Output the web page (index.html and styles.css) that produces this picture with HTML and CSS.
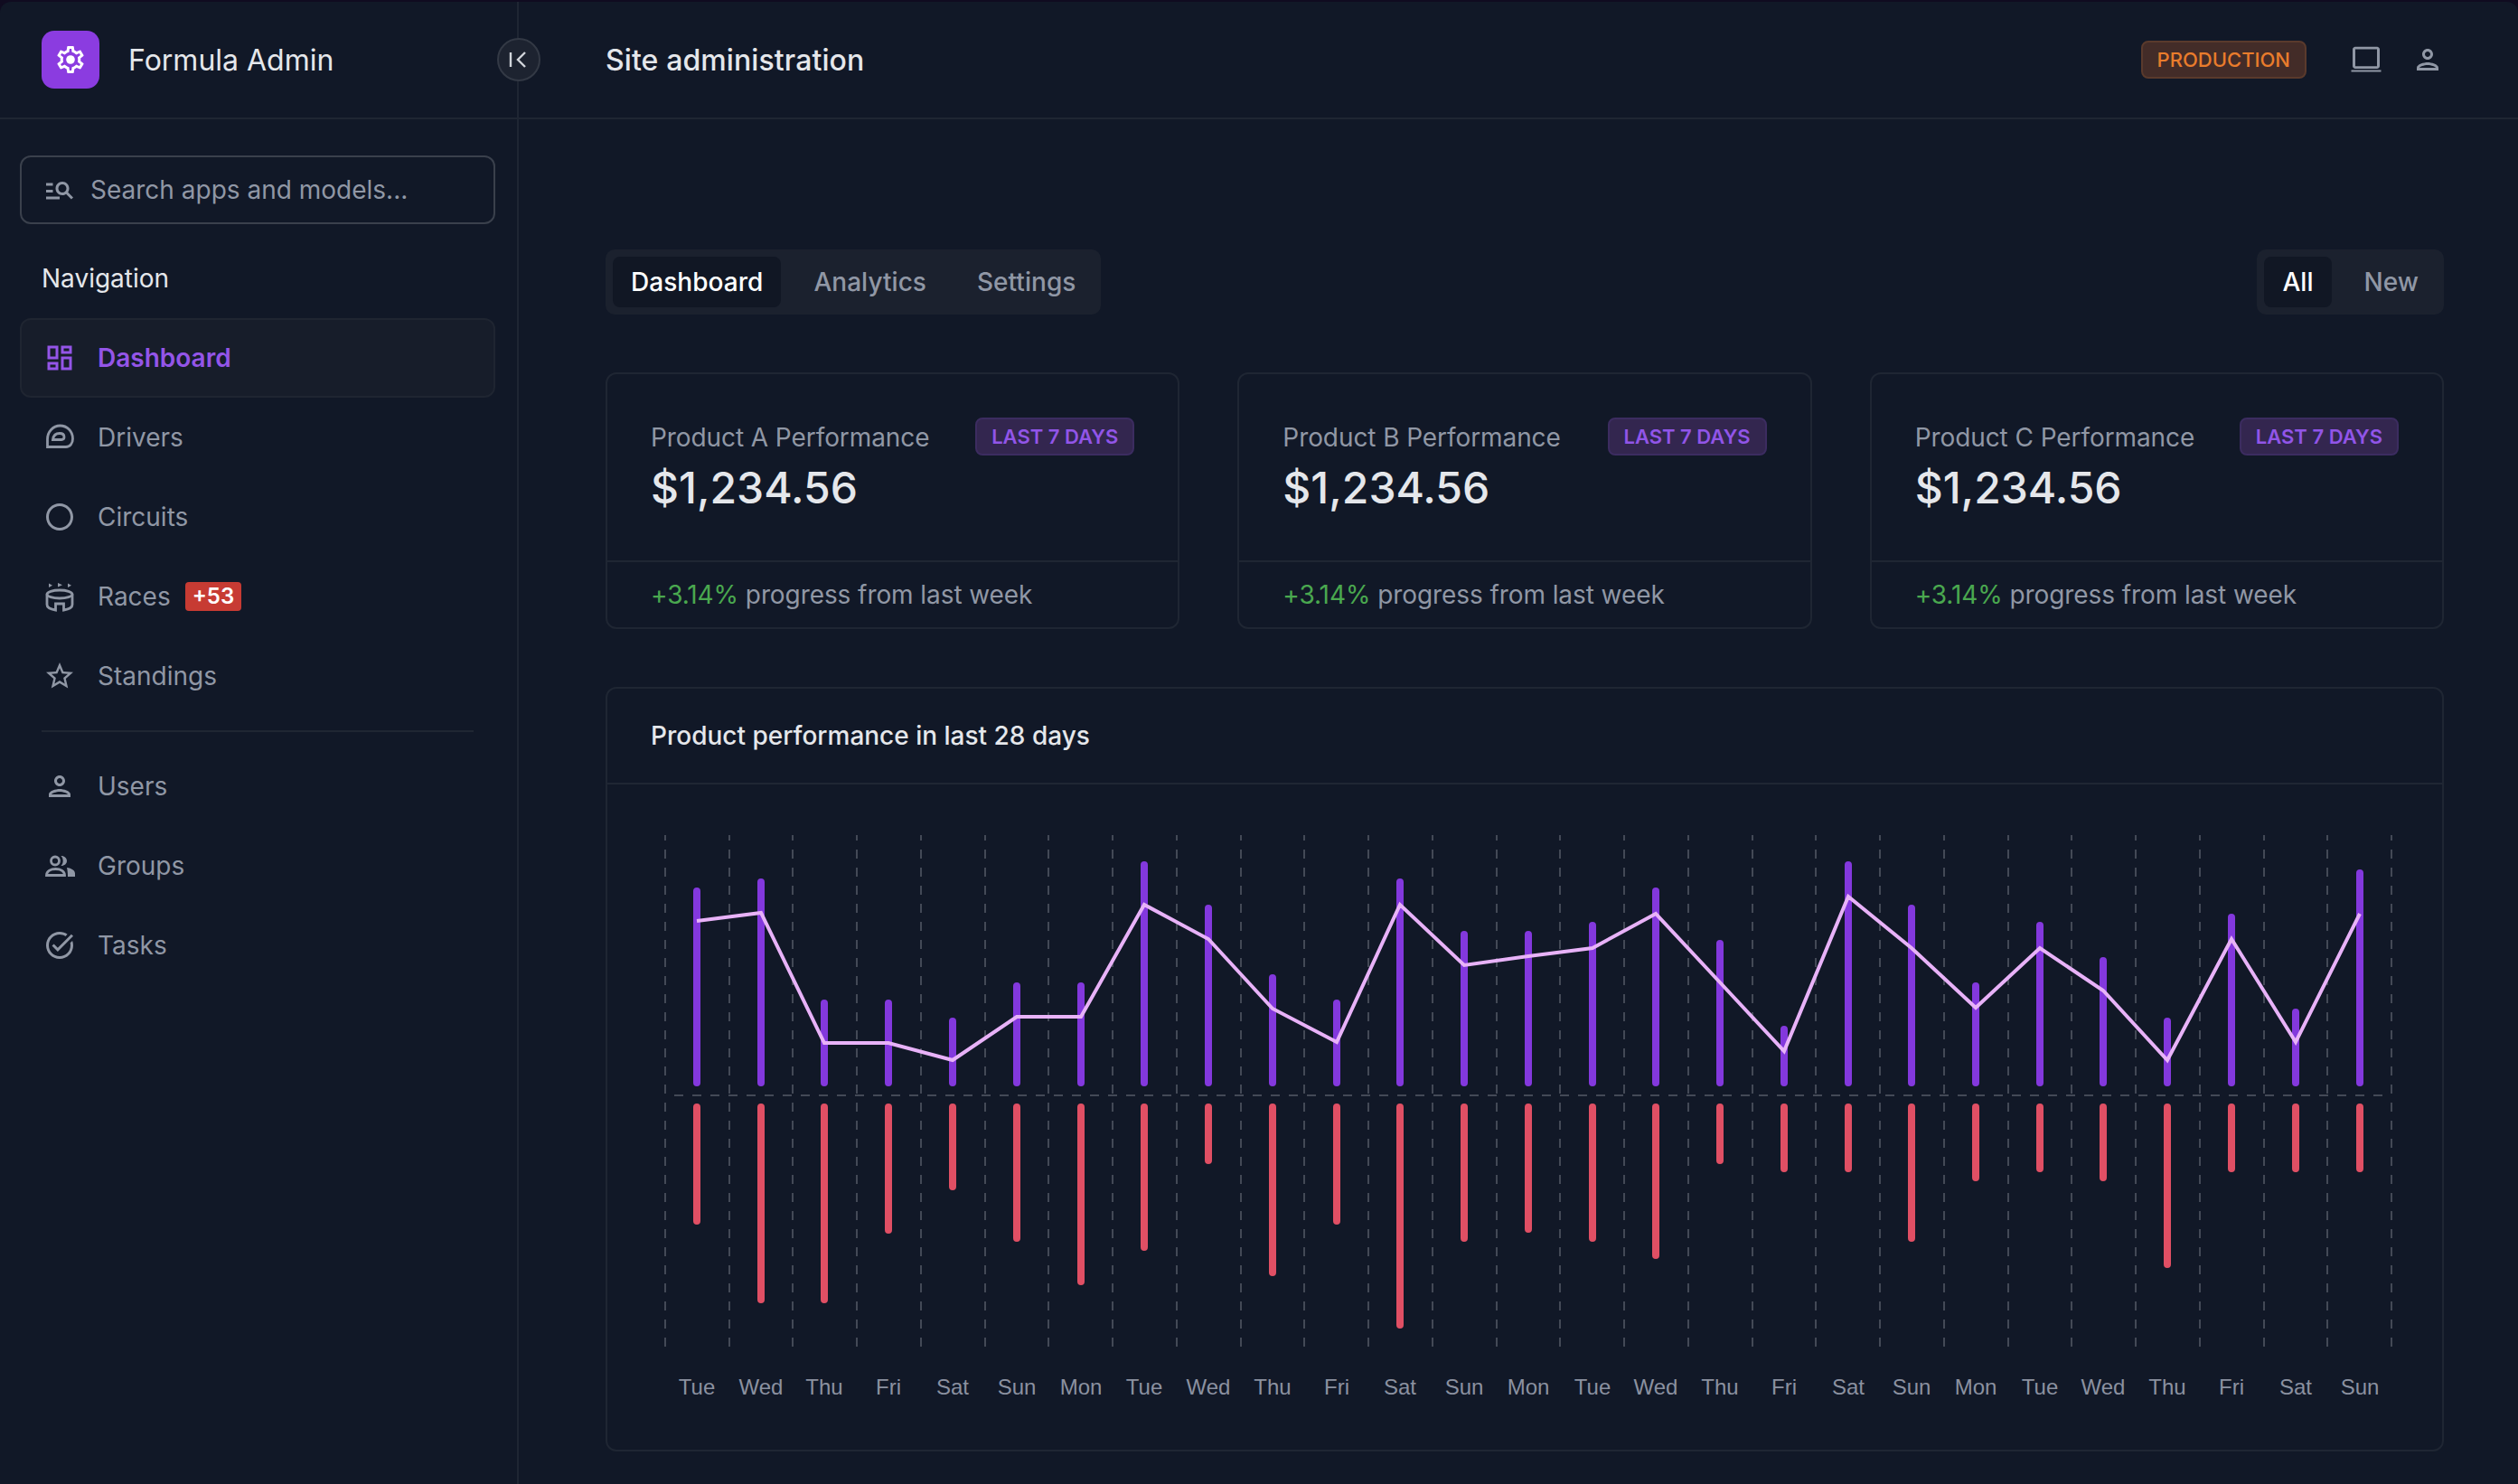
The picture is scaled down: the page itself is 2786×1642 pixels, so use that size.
FILE: index.html
```html
<!DOCTYPE html>
<html lang="en">
<head>
    <meta charset="UTF-8">
    <meta name="viewport" content="width=device-width, initial-scale=1.0">
    <title>Formula Admin</title>
    <link rel="stylesheet" href="styles.css">
</head>
<body>
<div class="app">
    <aside class="sidebar">
        <div class="brand">
            <div class="brand-logo">
                <svg class="icon" viewBox="0 0 24 24"><path d="M19.43 12.98c.04-.32.07-.64.07-.98 0-.34-.03-.66-.07-.98l2.11-1.65c.19-.15.24-.42.12-.64l-2-3.46c-.09-.16-.26-.25-.44-.25-.06 0-.12.01-.17.03l-2.49 1c-.52-.4-1.08-.73-1.69-.98l-.38-2.65C14.46 2.18 14.25 2 14 2h-4c-.25 0-.46.18-.49.42l-.38 2.65c-.61.25-1.17.59-1.69.98l-2.49-1c-.06-.02-.12-.03-.18-.03-.17 0-.34.09-.43.25l-2 3.46c-.13.22-.07.49.12.64l2.11 1.65c-.04.32-.07.65-.07.98 0 .33.03.66.07.98l-2.11 1.65c-.19.15-.24.42-.12.64l2 3.46c.09.16.26.25.44.25.06 0 .12-.01.17-.03l2.49-1c.52.4 1.08.73 1.69.98l.38 2.65c.03.24.24.42.49.42h4c.25 0 .46-.18.49-.42l.38-2.65c.61-.25 1.17-.59 1.69-.98l2.49 1c.06.02.12.03.18.03.17 0 .34-.09.43-.25l2-3.46c.12-.22.07-.49-.12-.64l-2.11-1.65zm-1.98-1.71c.04.31.05.52.05.73 0 .21-.02.43-.05.73l-.14 1.13.89.7 1.08.84-.7 1.21-1.27-.51-1.04-.42-.9.68c-.43.32-.84.56-1.25.73l-1.06.43-.16 1.13-.2 1.35h-1.4l-.19-1.35-.16-1.13-1.06-.43c-.43-.18-.83-.41-1.23-.71l-.91-.7-1.06.43-1.27.51-.7-1.21 1.08-.84.89-.7-.14-1.13c-.03-.31-.05-.54-.05-.74s.02-.43.05-.73l.14-1.13-.89-.7-1.08-.84.7-1.21 1.27.51 1.04.42.9-.68c.43-.32.84-.56 1.25-.73l1.06-.43.16-1.13.2-1.35h1.39l.19 1.35.16 1.13 1.06.43c.43.18.83.41 1.23.71l.91.7 1.06-.43 1.27-.51.7 1.21-1.07.85-.89.7.14 1.13z"/><circle cx="12" cy="12" r="3.2"/></svg>
            </div>
            <span class="brand-name">Formula Admin</span>
            <button class="collapse-btn">
                <svg viewBox="0 0 24 24"><path d="M3 4v16M19 4l-8 8 8 8"/></svg>
            </button>
        </div>
        <div class="sidebar-body">
            <div class="search">
                <svg class="icon" viewBox="0 0 24 24"><path d="M7 9H2V7h5v2zm0 3H2v2h5v-2zm13.59 7-3.83-3.83c-.8.52-1.74.83-2.76.83-2.76 0-5-2.24-5-5s2.24-5 5-5 5 2.24 5 5c0 1.02-.31 1.96-.83 2.75L22 17.59 20.59 19zM17 11c0-1.65-1.35-3-3-3s-3 1.35-3 3 1.35 3 3 3 3-1.35 3-3zM2 19h10v-2H2v2z"/></svg>
                <span>Search apps and models...</span>
            </div>
            <div class="nav-title">Navigation</div>
            <nav class="nav">
                <a class="nav-item active">
                    <svg class="icon" viewBox="0 0 24 24"><path d="M19 5v2h-4V5h4M9 5v6H5V5h4m10 8v6h-4v-6h4M9 17v2H5v-2h4M21 3h-8v6h8V3zM11 3H3v10h8V3zm10 8h-8v10h8V11zm-10 4H3v6h8v-6z"/></svg>
                    Dashboard
                </a>
                <a class="nav-item">
                    <svg class="icon line" viewBox="0 0 36 36"><path d="M4.5 28.5H25C29.5 28.5 32.5 24.5 32.5 19.5 32.5 11 26 5 18.5 5 10.5 5 4.5 12 4.5 20ZM10.5 20.5C11 16 14 13.5 18 13.5 21.5 13.5 23 15.5 23 17.5 23 19.5 21.5 20.5 20 20.5Z"/></svg>
                    Drivers
                </a>
                <a class="nav-item">
                    <svg class="icon" viewBox="0 0 24 24"><path d="M12 2C6.48 2 2 6.48 2 12s4.48 10 10 10 10-4.48 10-10S17.52 2 12 2zm0 18c-4.42 0-8-3.58-8-8s3.58-8 8-8 8 3.58 8 8-3.58 8-8 8z"/></svg>
                    Circuits
                </a>
                <a class="nav-item">
                    <svg class="icon line" viewBox="0 0 36 36"><path class="solid" d="M6 3.5v4.5l4-2.250zM16 3v4.500l5-2.250zM27 3.500v4.500l4-2.250z"/><ellipse cx="18" cy="15.500" rx="14" ry="4.500"/><path d="M4 15.500V27C4 30 7 32 13.500 33V26h9v7C29 32 32 30 32 27V15.500"/></svg>
                    Races
                    <span class="count">+53</span>
                </a>
                <a class="nav-item">
                    <svg class="icon" viewBox="0 0 24 24"><path d="M22 9.24l-7.190-.62L12 2 9.190 8.630 2 9.240l5.460 4.730L5.820 21 12 17.270 18.180 21l-1.630-7.030L22 9.240zM12 15.400l-3.760 2.270 1-4.280-3.320-2.880 4.380-.38L12 6.100l1.710 4.040 4.380.38-3.320 2.880 1 4.280L12 15.400z"/></svg>
                    Standings
                </a>
                <div class="nav-divider"></div>
                <a class="nav-item">
                    <svg class="icon" viewBox="0 0 24 24"><path d="M12 6c1.100 0 2 .9 2 2s-.9 2-2 2-2-.9-2-2 .9-2 2-2m0 10c2.700 0 5.800 1.290 6 2H6c.23-.72 3.310-2 6-2m0-12C9.790 4 8 5.790 8 8s1.790 4 4 4 4-1.790 4-4-1.790-4-4-4zm0 10c-2.670 0-8 1.340-8 4v2h16v-2c0-2.660-5.330-4-8-4z"/></svg>
                    Users
                </a>
                <a class="nav-item">
                    <svg class="icon line" viewBox="0 0 36 36"><circle cx="13" cy="12.500" r="4.500"/><path d="M3.500 28.500c0-5 5-7 10-7s10 2 10 7z"/><path class="solid" d="M19.500 7c4 0 6.500 2.500 6.500 5.500s-2.500 5.500-6.500 5.500c1.500-1.500 2.200-3.400 2.200-5.500s-.7-4-2.200-5.500zM26 20c5 .6 9 3 9 6.500V30H27c0-4-.3-7-1-10z"/></svg>
                    Groups
                </a>
                <a class="nav-item">
                    <svg class="icon" viewBox="0 0 24 24"><path d="M22 5.180 10.590 16.600l-4.240-4.240 1.410-1.410 2.830 2.830 10-10L22 5.180zm-2.210 5.040c.13.57.21 1.170.21 1.780 0 4.420-3.580 8-8 8s-8-3.580-8-8 3.580-8 8-8c1.580 0 3.040.46 4.280 1.250l1.440-1.440C16.100 2.670 14.130 2 12 2 6.480 2 2 6.480 2 12s4.480 10 10 10 10-4.480 10-10c0-1.190-.22-2.330-.6-3.390l-1.610 1.610z"/></svg>
                    Tasks
                </a>
            </nav>
        </div>
    </aside>

    <div class="content">
        <header class="topbar">
            <h1 class="page-title">Site administration</h1>
            <div class="topbar-right">
                <span class="env-badge">PRODUCTION</span>
                <svg class="icon" viewBox="0 0 24 24"><path d="M1 21v-1.400h22V21zM4 18.600c-1.100 0-2-.9-2-2V4.500c0-1.100.9-2 2-2h16c1.100 0 2 .9 2 2v12.100c0 1.100-.9 2-2 2zm0-1.800h16V4.300H4z"/></svg>
                <svg class="icon" viewBox="0 0 24 24"><path d="M12 6c1.100 0 2 .9 2 2s-.9 2-2 2-2-.9-2-2 .9-2 2-2m0 10c2.700 0 5.800 1.290 6 2H6c.23-.72 3.310-2 6-2m0-12C9.790 4 8 5.790 8 8s1.790 4 4 4 4-1.790 4-4-1.790-4-4-4zm0 10c-2.670 0-8 1.340-8 4v2h16v-2c0-2.660-5.330-4-8-4z"/></svg>
            </div>
        </header>

        <main class="main">
            <div class="toolbar">
                <div class="tabs">
                    <span class="tab active">Dashboard</span>
                    <span class="tab">Analytics</span>
                    <span class="tab">Settings</span>
                </div>
                <div class="tabs">
                    <span class="tab active">All</span>
                    <span class="tab">New</span>
                </div>
            </div>

            <section class="stats">
                <div class="card stat">
                    <div class="stat-body">
                        <div class="stat-text">
                            <div class="stat-label">Product A Performance</div>
                            <div class="stat-value">$1,234.56</div>
                        </div>
                        <span class="range-badge">LAST 7 DAYS</span>
                    </div>
                    <div class="stat-foot"><span class="up">+3.14%</span> progress from last week</div>
                </div>
                <div class="card stat">
                    <div class="stat-body">
                        <div class="stat-text">
                            <div class="stat-label">Product B Performance</div>
                            <div class="stat-value">$1,234.56</div>
                        </div>
                        <span class="range-badge">LAST 7 DAYS</span>
                    </div>
                    <div class="stat-foot"><span class="up">+3.14%</span> progress from last week</div>
                </div>
                <div class="card stat">
                    <div class="stat-body">
                        <div class="stat-text">
                            <div class="stat-label">Product C Performance</div>
                            <div class="stat-value">$1,234.56</div>
                        </div>
                        <span class="range-badge">LAST 7 DAYS</span>
                    </div>
                    <div class="stat-foot"><span class="up">+3.14%</span> progress from last week</div>
                </div>
            </section>

            <section class="card chart-card">
                <div class="chart-head">Product performance in last 28 days</div>
                <!-- viewBox uses page coordinates so the values read straight off the screen -->
                <svg class="chart" viewBox="672 868 2030 736" width="2030" height="736">
                    <path class="grid" d="M736 1490V924M807 1490V924M877 1490V924M948 1490V924M1019 1490V924M1090 1490V924M1160 1490V924M1231 1490V924M1302 1490V924M1373 1490V924M1443 1490V924M1514 1490V924M1585 1490V924M1656 1490V924M1726 1490V924M1797 1490V924M1868 1490V924M1939 1490V924M2009 1490V924M2080 1490V924M2151 1490V924M2222 1490V924M2292 1490V924M2363 1490V924M2434 1490V924M2505 1490V924M2575 1490V924M2646 1490V924M746 1212H2636"/>
                    <path class="bars-up" d="M771 1198V986M842 1198V976M912 1198V1110M983 1198V1110M1054 1198V1130M1125 1198V1091M1196 1198V1091M1266 1198V957M1337 1198V1005M1408 1198V1082M1479 1198V1110M1549 1198V976M1620 1198V1034M1691 1198V1034M1762 1198V1024M1832 1198V986M1903 1198V1044M1974 1198V1139M2045 1198V957M2115 1198V1005M2186 1198V1091M2257 1198V1024M2327 1198V1063M2398 1198V1130M2469 1198V1015M2540 1198V1120M2611 1198V966"/>
                    <path class="bars-down" d="M771 1225V1351M842 1225V1438M912 1225V1438M983 1225V1361M1054 1225V1313M1125 1225V1370M1196 1225V1418M1266 1225V1380M1337 1225V1284M1408 1225V1408M1479 1225V1351M1549 1225V1466M1620 1225V1370M1691 1225V1360M1762 1225V1370M1832 1225V1389M1903 1225V1284M1974 1225V1293M2045 1225V1293M2115 1225V1370M2186 1225V1303M2257 1225V1293M2327 1225V1303M2398 1225V1399M2469 1225V1293M2540 1225V1293M2611 1225V1293"/>
                    <polyline class="trend" points="771,1019 842,1010 912,1154 983,1154 1054,1173 1125,1125 1196,1125 1266,1001 1337,1039 1408,1116 1479,1153 1549,1001 1620,1068 1691,1058 1762,1049 1832,1011 1903,1087 1974,1163 2045,992 2115,1049 2186,1115 2257,1049 2327,1096 2398,1173 2469,1039 2540,1153 2611,1011"/>
                    <g class="ticks">
                        <text x="771" y="1543">Tue</text>
                        <text x="842" y="1543">Wed</text>
                        <text x="912" y="1543">Thu</text>
                        <text x="983" y="1543">Fri</text>
                        <text x="1054" y="1543">Sat</text>
                        <text x="1125" y="1543">Sun</text>
                        <text x="1196" y="1543">Mon</text>
                        <text x="1266" y="1543">Tue</text>
                        <text x="1337" y="1543">Wed</text>
                        <text x="1408" y="1543">Thu</text>
                        <text x="1479" y="1543">Fri</text>
                        <text x="1549" y="1543">Sat</text>
                        <text x="1620" y="1543">Sun</text>
                        <text x="1691" y="1543">Mon</text>
                        <text x="1762" y="1543">Tue</text>
                        <text x="1832" y="1543">Wed</text>
                        <text x="1903" y="1543">Thu</text>
                        <text x="1974" y="1543">Fri</text>
                        <text x="2045" y="1543">Sat</text>
                        <text x="2115" y="1543">Sun</text>
                        <text x="2186" y="1543">Mon</text>
                        <text x="2257" y="1543">Tue</text>
                        <text x="2327" y="1543">Wed</text>
                        <text x="2398" y="1543">Thu</text>
                        <text x="2469" y="1543">Fri</text>
                        <text x="2540" y="1543">Sat</text>
                        <text x="2611" y="1543">Sun</text>
                    </g>
                </svg>
            </section>
        </main>
    </div>
</div>
</body>
</html>
```

FILE: styles.css
```css
* {
    box-sizing: border-box;
}
html, body {
    height: 100%;
}
body {
    margin: 0;
    background: #100b20;
    color: #e5e7eb;
    font-family: Inter, "Noto Sans", sans-serif;
    font-size: 28px;
    overflow: hidden;
}
.app {
    display: flex;
    height: 1640px;
    margin-top: 2px;
    background: #111827;
    border-radius: 12px 12px 0 0;
}
.icon {
    width: 36px;
    height: 36px;
    flex: none;
    fill: currentColor;
}
.icon.line {
    fill: none;
    stroke: currentColor;
    stroke-width: 2.8;
}
.icon.line .solid {
    fill: currentColor;
    stroke: none;
}

/* sidebar */
.sidebar {
    width: 574px;
    flex: none;
    border-right: 2px solid #1f2633;
}
.brand {
    position: relative;
    display: flex;
    align-items: center;
    gap: 32px;
    height: 130px;
    padding-left: 46px;
    border-bottom: 2px solid #1f2633;
}
.brand-logo {
    display: flex;
    align-items: center;
    justify-content: center;
    width: 64px;
    height: 64px;
    border-radius: 14px;
    background: #8b3ce0;
    color: #fff;
}
.brand-name {
    font-size: 32px;
}
.collapse-btn {
    position: absolute;
    top: 40px;
    right: -26px;
    display: flex;
    align-items: center;
    justify-content: center;
    width: 48px;
    height: 48px;
    padding: 0;
    border: 2px solid #333945;
    border-radius: 50%;
    background: #1d2330;
}
.collapse-btn svg {
    width: 24px;
    height: 24px;
    fill: none;
    stroke: #d1d5db;
    stroke-width: 2.4;
}
.sidebar-body {
    padding: 40px 24px 40px 22px;
}
.search {
    display: flex;
    align-items: center;
    gap: 16px;
    height: 76px;
    padding-left: 24px;
    border: 2px solid #3a404c;
    border-radius: 12px;
    color: #9097a5;
}
.nav-title {
    margin: 40px 0 24px;
    padding-left: 24px;
    line-height: 40px;
}
.nav-item {
    display: flex;
    align-items: center;
    gap: 24px;
    height: 88px;
    padding-left: 26px;
    color: #9097a5;
}
.nav-item.active {
    padding-left: 24px;
    border: 2px solid #1f2531;
    border-radius: 12px;
    background: #171d2a;
    color: #9455e8;
    font-weight: 600;
}
.count {
    margin-left: -8px;
    padding: 0 8px;
    border-radius: 4px;
    background: #c73b33;
    color: #fff;
    font-size: 24px;
    font-weight: 600;
    line-height: 32px;
}
.nav-divider {
    height: 2px;
    margin: 16px 24px 16px 24px;
    background: #1f2633;
}

/* top bar */
.content {
    flex: 1;
    min-width: 0;
}
.topbar {
    display: flex;
    align-items: center;
    justify-content: space-between;
    height: 130px;
    padding: 0 82px 0 96px;
    border-bottom: 2px solid #1f2633;
}
.page-title {
    margin: 0;
    font-size: 32px;
    font-weight: 500;
    letter-spacing: .1px;
}
.topbar-right {
    display: flex;
    align-items: center;
    gap: 32px;
    color: #9097a5;
}
.env-badge {
    margin-right: 16px;
    padding: 0 16px;
    border: 2px solid #5a3a2c;
    border-radius: 8px;
    background: #432c28;
    color: #e97c2c;
    font-size: 22px;
    font-weight: 500;
    line-height: 38px;
}

/* main */
.main {
    padding: 144px 82px 0 96px;
}
.toolbar {
    display: flex;
    justify-content: space-between;
}
.tabs {
    display: flex;
    gap: 16px;
    height: 72px;
    padding: 8px;
    border-radius: 10px;
    background: #1b212e;
}
.tab {
    padding: 0 20px;
    border-radius: 8px;
    color: #9097a5;
    font-weight: 500;
    letter-spacing: .04px;
    line-height: 56px;
}
.tab.active {
    background: #111724;
    color: #fff;
}
.card {
    border: 2px solid #1f2633;
    border-radius: 12px;
}
.stats {
    display: grid;
    grid-template-columns: repeat(3, 1fr);
    gap: 64px;
    margin-top: 64px;
}
.stat-body {
    display: flex;
    justify-content: space-between;
    height: 206px;
    padding: 48px 48px 0;
}
.stat-label {
    color: #9097a5;
    letter-spacing: -.08px;
    line-height: 44px;
}
.stat-value {
    margin-top: 6px;
    font-size: 48px;
    font-weight: 500;
    line-height: 56px;
}
.range-badge {
    align-self: flex-start;
    padding: 0 16px;
    border: 2px solid #3c2c60;
    border-radius: 8px;
    background: #33264f;
    color: #9155e8;
    font-size: 22px;
    font-weight: 600;
    line-height: 38px;
}
.stat-foot {
    height: 74px;
    padding-left: 48px;
    border-top: 2px solid #1f2633;
    color: #9097a5;
    letter-spacing: -.08px;
    line-height: 72px;
}
.up {
    color: #4aa84f;
}

/* chart */
.chart-card {
    margin-top: 64px;
}
.chart-head {
    padding-left: 48px;
    border-bottom: 2px solid #1f2633;
    font-weight: 500;
    line-height: 104px;
}
.chart {
    display: block;
}
.chart path, .chart polyline {
    fill: none;
}
.grid {
    stroke: #434956;
    stroke-width: 2;
    stroke-dasharray: 10 10;
}
.bars-up, .bars-down {
    stroke-width: 8;
    stroke-linecap: round;
}
.bars-up {
    stroke: #8338dd;
}
.bars-down {
    stroke: #e04f64;
}
.trend {
    stroke: #e8b2f8;
    stroke-width: 4;
}
.ticks text {
    fill: #8b91a0;
    font-family: "Liberation Sans", sans-serif;
    font-size: 24px;
    text-anchor: middle;
}
```
